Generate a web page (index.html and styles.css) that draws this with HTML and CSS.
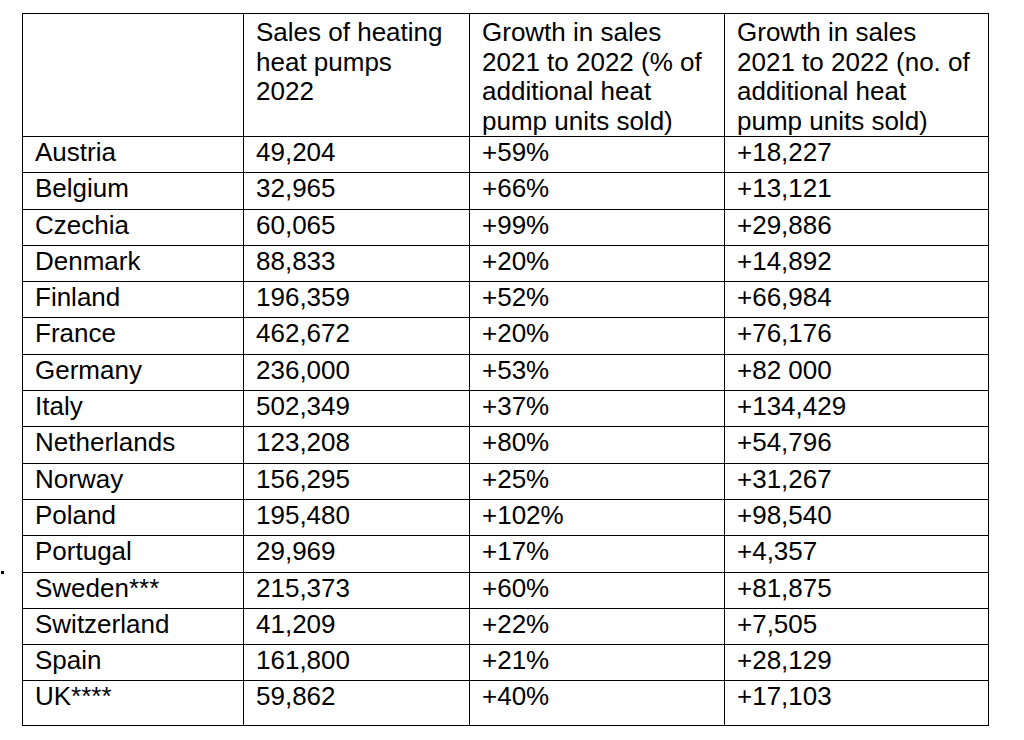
FILE: index.html
```html
<!DOCTYPE html>
<html lang="en">
<head>
<meta charset="utf-8">
<title>Heat pump sales 2022</title>
<link rel="stylesheet" href="styles.css">
</head>
<body>
<div class="page">
  <div class="gutter"><span class="dot"></span></div>
  <table class="sales">
    <colgroup>
      <col class="c1"><col class="c2"><col class="c3"><col class="c4">
    </colgroup>
    <thead>
      <tr>
        <th></th>
        <th>Sales of heating heat pumps 2022</th>
        <th>Growth in sales 2021 to 2022 (% of additional heat pump units sold)</th>
        <th>Growth in sales 2021 to 2022 (no. of additional heat pump units sold)</th>
      </tr>
    </thead>
    <tbody>
      <tr><td>Austria</td><td>49,204</td><td>+59%</td><td>+18,227</td></tr>
      <tr><td>Belgium</td><td>32,965</td><td>+66%</td><td>+13,121</td></tr>
      <tr><td>Czechia</td><td>60,065</td><td>+99%</td><td>+29,886</td></tr>
      <tr><td>Denmark</td><td>88,833</td><td>+20%</td><td>+14,892</td></tr>
      <tr><td>Finland</td><td>196,359</td><td>+52%</td><td>+66,984</td></tr>
      <tr><td>France</td><td>462,672</td><td>+20%</td><td>+76,176</td></tr>
      <tr><td>Germany</td><td>236,000</td><td>+53%</td><td>+82 000</td></tr>
      <tr><td>Italy</td><td>502,349</td><td>+37%</td><td>+134,429</td></tr>
      <tr><td>Netherlands</td><td>123,208</td><td>+80%</td><td>+54,796</td></tr>
      <tr><td>Norway</td><td>156,295</td><td>+25%</td><td>+31,267</td></tr>
      <tr><td>Poland</td><td>195,480</td><td>+102%</td><td>+98,540</td></tr>
      <tr><td>Portugal</td><td>29,969</td><td>+17%</td><td>+4,357</td></tr>
      <tr><td>Sweden***</td><td>215,373</td><td>+60%</td><td>+81,875</td></tr>
      <tr><td>Switzerland</td><td>41,209</td><td>+22%</td><td>+7,505</td></tr>
      <tr><td>Spain</td><td>161,800</td><td>+21%</td><td>+28,129</td></tr>
      <tr class="last"><td>UK****</td><td>59,862</td><td>+40%</td><td>+17,103</td></tr>
    </tbody>
  </table>
</div>
</body>
</html>
```

FILE: styles.css
```css
html, body {
  margin: 0;
  padding: 0;
  background: #ffffff;
}

body {
  font-family: "Liberation Sans", Arial, sans-serif;
  color: #000000;
}

.page {
  display: flex;
  align-items: flex-start;
  padding-top: 13px;
}

.gutter {
  width: 22px;
  flex: 0 0 22px;
}

.dot {
  display: block;
  width: 3px;
  height: 3px;
  margin-left: 1px;
  margin-top: 558px;
  background: #000000;
}

.sales {
  border-collapse: collapse;
  table-layout: fixed;
  width: 966px;
  font-size: 26px;
  line-height: 29.5px;
}

.c1 { width: 221px; }
.c2 { width: 226px; }
.c3 { width: 255px; }
.c4 { width: 264px; }

.sales th,
.sales td {
  border: 1px solid #000000;
  text-align: left;
  vertical-align: top;
  font-weight: normal;
  padding: 1px 12px 4.8px 12px;
}

.sales th {
  padding: 4px 16px 0 12px;
}

.sales tr.last td {
  padding-bottom: 13.5px;
}
```
